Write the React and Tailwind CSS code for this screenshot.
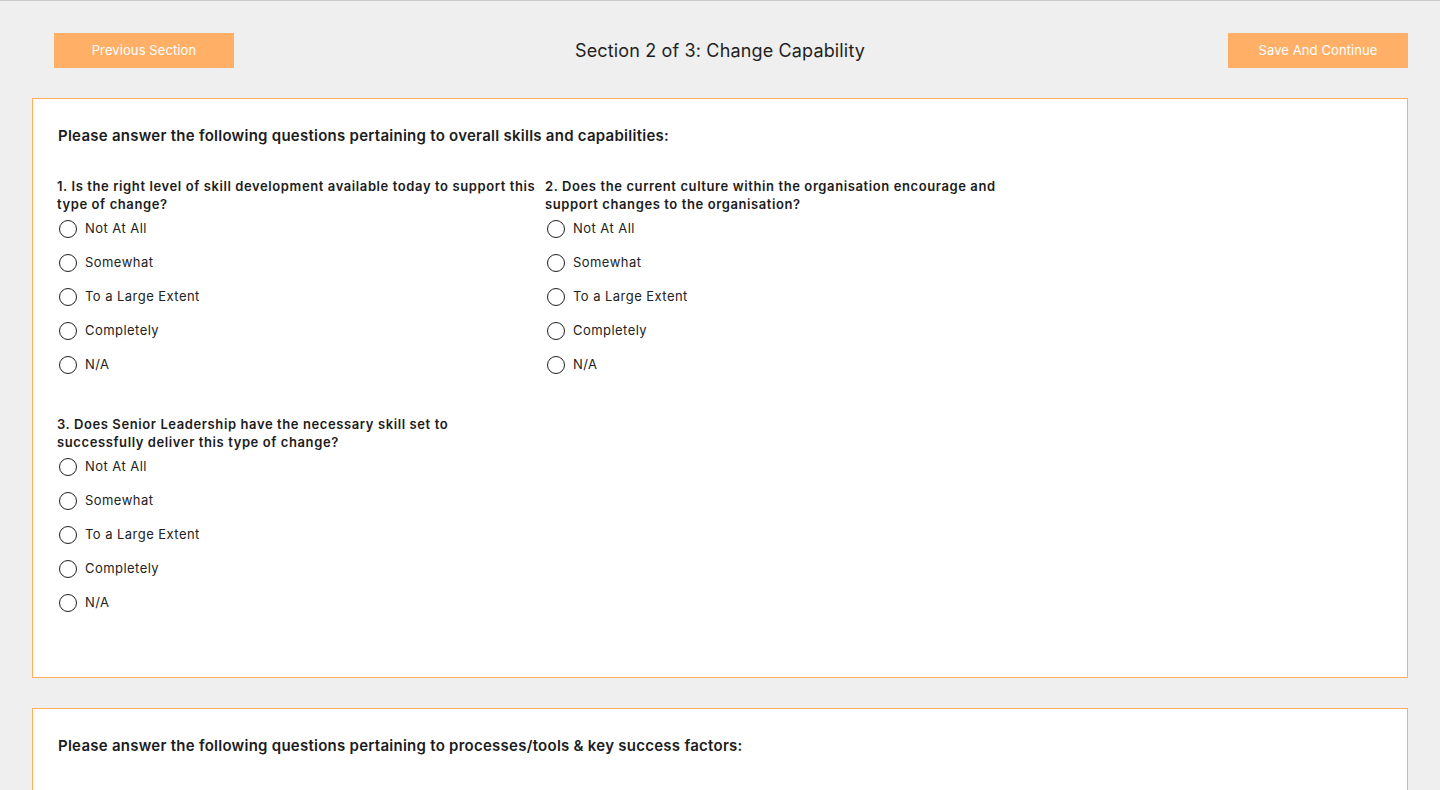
const options = ["Not At All", "Somewhat", "To a Large Extent", "Completely", "N/A"];

const questions = [
  "1. Is the right level of skill development available today to support this type of change?",
  "2. Does the current culture within the organisation encourage and support changes to the organisation?",
  "3. Does Senior Leadership have the necessary skill set to successfully deliver this type of change?",
];

const Question = ({ text, name }) => {
  return (
    <div className="w-[488px] pb-[38px]">
      <p className="w-[481px] text-[13px] font-semibold leading-[18px] tracking-[0.6px] text-[#1c1c1c]">{text}</p>
      <div className="mt-[4px] flex flex-col gap-[10px]">
        {options.map((opt) => (
          <label key={opt} className="flex h-6 items-center gap-[8px] pl-[2px] cursor-pointer">
            <span className="block h-[18px] w-[18px] rounded-full border-[1.5px] border-[#1f1f1f] bg-white"></span>
            <span className="text-[13px] tracking-[0.45px] text-[#222]">{opt}</span>
            <input type="radio" name={name} className="hidden" />
          </label>
        ))}
      </div>
    </div>
  );
};

export default function App() {
  return (
    <div
      className="min-h-[790px] border-t border-[#c9c9c9] bg-[#efefef]"
      style={{ fontFamily: "Inter, 'Noto Sans', sans-serif" }}
    >
      <div className="grid grid-cols-[1fr_auto_1fr] items-center pt-[32px]">
        <button className="ml-[54px] h-[35px] w-[180px] justify-self-start bg-[#ffb066] text-[13px] tracking-[0.1px] text-white">
          Previous Section
        </button>
        <h1 className="text-[18px] tracking-[0.15px] text-[#1f1f1f]">Section 2 of 3: Change Capability</h1>
        <button className="mr-[32px] h-[35px] w-[180px] justify-self-end bg-[#ffb066] text-[13px] tracking-[0.1px] text-white">
          Save And Continue
        </button>
      </div>

      <div className="px-[32px]">
        <div className="mt-[30px] border border-[#ffad5e] bg-white px-[24px] pt-[27px] pb-[24px]">
          <h2 className="pl-[1px] text-[15px] font-semibold leading-5 tracking-[0.26px] text-[#1c1c1c]">
            Please answer the following questions pertaining to overall skills and capabilities:
          </h2>
          <div className="mt-[31px] flex flex-wrap">
            {questions.map((q, i) => (
              <Question key={i} text={q} name={"q" + i} />
            ))}
          </div>
        </div>

        <div className="mt-[30px] h-[120px] border border-[#ffad5e] bg-white px-[24px] pt-[27px]">
          <h2 className="pl-[1px] text-[15px] font-semibold leading-5 tracking-[0.26px] text-[#1c1c1c]">
            Please answer the following questions pertaining to processes/tools &amp; key success factors:
          </h2>
        </div>
      </div>
    </div>
  );
}
